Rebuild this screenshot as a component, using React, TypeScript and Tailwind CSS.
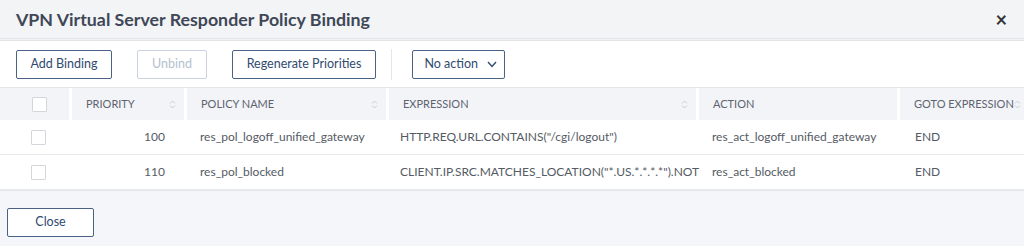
import { useState } from "react";

const rows = [
  {
    priority: 100,
    name: "res_pol_logoff_unified_gateway",
    expression: 'HTTP.REQ.URL.CONTAINS("/cgi/logout")',
    action: "res_act_logoff_unified_gateway",
    goto: "END",
  },
  {
    priority: 110,
    name: "res_pol_blocked",
    expression: 'CLIENT.IP.SRC.MATCHES_LOCATION("*.US.*.*.*.*").NOT',
    action: "res_act_blocked",
    goto: "END",
  },
];

const cols = "grid grid-cols-[69px_112px_199px_307px_198px_124px] gap-x-[3px]";

function SortIcon() {
  return (
    <svg width="7" height="11" viewBox="0 0 7 11" className="shrink-0">
      <path d="M1 4.5 L3.5 2 L6 4.5" fill="none" stroke="#c9ccd2" strokeWidth="1" />
      <path d="M1 6.5 L3.5 9 L6 6.5" fill="none" stroke="#c9ccd2" strokeWidth="1" />
    </svg>
  );
}

function Box() {
  return <div className="w-[15px] h-[15px] border border-[#d3d6db] bg-white rounded-[1px]" />;
}

export default function App() {
  const [action] = useState("No action");

  return (
    <div className="w-[1024px] h-[246px] bg-white flex flex-col overflow-hidden font-['Lato',sans-serif] text-[12px] text-[#555b64]">
      {/* Title bar */}
      <div className="h-[41px] shrink-0 bg-[#f3f4f6] border-b-[3px] border-double border-[#e2e4e8] flex items-center justify-between pl-[16px] pr-[17px]">
        <span className="text-[17.8px] font-bold text-[#404756]">
          VPN Virtual Server Responder Policy Binding
        </span>
        <span className="text-[20px] leading-none font-bold text-[#333]">×</span>
      </div>

      {/* Toolbar */}
      <div className="h-[46px] shrink-0 flex items-start pt-[9px] pl-[16px] gap-[25px]">
        <button className="h-[29px] w-[96px] border border-[#4a6285] rounded-[2px] text-[12.5px] text-[#304a70]">
          Add Binding
        </button>
        <button className="h-[29px] w-[70px] border border-[#c9d2de] rounded-[2px] text-[12.5px] text-[#b4bfcd]">
          Unbind
        </button>
        <button className="h-[29px] w-[144px] border border-[#4a6285] rounded-[2px] text-[12.5px] text-[#304a70]">
          Regenerate Priorities
        </button>
        <div className="flex items-center gap-[20px] -ml-[10px] -mt-[1px]">
          <div className="w-px h-[31px] bg-[#e4e6ea]" />
          <button className="h-[29px] w-[93px] border border-[#4a6285] rounded-[2px] text-[12.5px] text-[#304a70] flex items-center justify-end pr-[7px] gap-[9px]">
            {action}
            <svg width="10" height="7" viewBox="0 0 10 7">
              <path d="M1 1 L5 5.5 L9 1" fill="none" stroke="#304a70" strokeWidth="1.4" />
            </svg>
          </button>
        </div>
      </div>

      {/* Table */}
      <div className="border-t border-[#e4e6ea]">
        <div className={`h-[32px] ${cols} items-stretch`}>
          <div className="bg-[#f3f4f8] flex items-center pl-[32px]">
            <Box />
          </div>
          {[
            ["PRIORITY", true],
            ["POLICY NAME", true],
            ["EXPRESSION", true],
            ["ACTION", false],
            ["GOTO EXPRESSION", true],
          ].map(([label, sort]) => (
            <div
              key={label as string}
              className="bg-[#f3f4f8] flex items-center justify-between pl-[14px] pr-[8px] text-[11px] text-[#5d6470] whitespace-nowrap"
            >
              <span>{label}</span>
              {sort && <SortIcon />}
            </div>
          ))}
        </div>
        {rows.map((r) => (
          <div
            key={r.priority}
            className={`h-[35px] ${cols} items-center border-b border-[#e7e9ec] whitespace-nowrap`}
          >
            <div className="pl-[31px]">
              <Box />
            </div>
            <div className="text-right pr-[19px]">{r.priority}</div>
            <div className="pl-[13px]">{r.name}</div>
            <div className="pl-[11px]">{r.expression}</div>
            <div className="pl-[13px]">{r.action}</div>
            <div className="pl-[15px]">{r.goto}</div>
          </div>
        ))}
      </div>

      {/* Footer */}
      <div className="flex-1 bg-[#f4f6f9] border-t border-[#e4e6ea] pl-[7px] pt-[17px]">
        <button className="h-[29px] w-[87px] border border-[#4a6285] rounded-[2px] bg-white text-[12.5px] text-[#304a70]">
          Close
        </button>
      </div>
    </div>
  );
}
